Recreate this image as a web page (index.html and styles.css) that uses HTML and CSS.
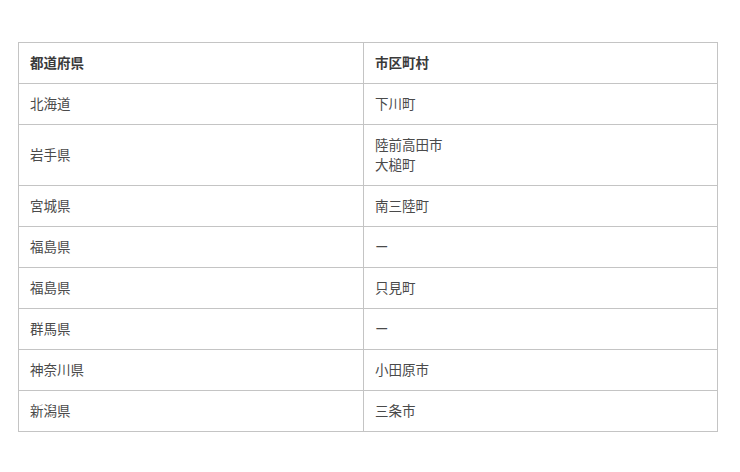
FILE: index.html
```html
<!DOCTYPE html>
<html lang="ja">
<head>
<meta charset="utf-8">
<link rel="stylesheet" href="styles.css">
</head>
<body>
<table class="areas">
  <thead>
    <tr><th class="pref">都道府県</th><th>市区町村</th></tr>
  </thead>
  <tbody>
    <tr><td>北海道</td><td>下川町</td></tr>
    <tr><td>岩手県</td><td>陸前高田市<br>大槌町</td></tr>
    <tr><td>宮城県</td><td>南三陸町</td></tr>
    <tr><td>福島県</td><td>ー</td></tr>
    <tr><td>福島県</td><td>只見町</td></tr>
    <tr><td>群馬県</td><td>ー</td></tr>
    <tr><td>神奈川県</td><td>小田原市</td></tr>
    <tr><td>新潟県</td><td>三条市</td></tr>
  </tbody>
</table>
</body>
</html>
```
FILE: styles.css
```css
html, body {
  margin: 0;
  background: #fff;
}
body {
  padding: 42px 0 0 18px;
  font-family: "Noto Sans CJK JP", "Noto Sans", sans-serif;
  font-size: 13.5px;
  line-height: 20px;
  color: #4a4a4a;
}
.areas {
  width: 700px;
  border-collapse: collapse;
  table-layout: fixed;
}
.areas th, .areas td {
  border: 1px solid #c4c4c4;
  padding: 9px 10px 11px 11px;
  text-align: left;
  vertical-align: middle;
}
.areas th {
  font-weight: bold;
  color: #3a3a3a;
}
.areas .pref {
  width: 323px;
}
```
